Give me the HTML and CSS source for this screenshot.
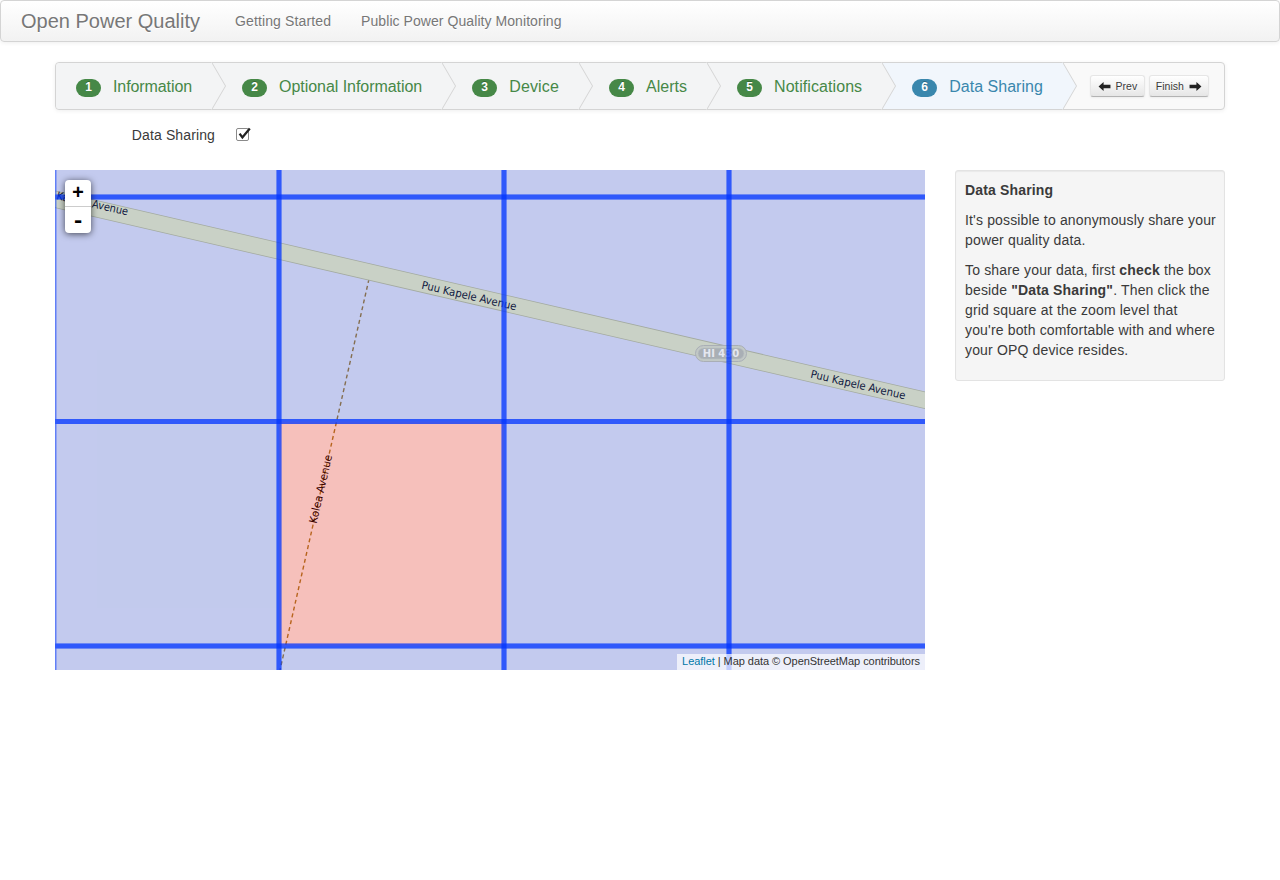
FILE: index.html
```html
<!DOCTYPE html>
<html lang="en">
<head>
<meta charset="utf-8">
<title>Open Power Quality</title>
<link rel="stylesheet" href="styles.css">
</head>
<body>
<nav class="navbar">
  <a class="brand" href="#">Open Power Quality</a>
  <ul class="nav">
    <li><a class="nav-short" href="#">Getting Started</a></li>
    <li><a class="nav-long" href="#">Public Power Quality Monitoring</a></li>
  </ul>
</nav>
<main class="container">
  <div class="wizard">
    <ul class="steps">
      <li class="step complete tight"><span class="badge">1</span>Information<span class="chevron"></span></li>
      <li class="step complete snug"><span class="badge">2</span>Optional Information<span class="chevron"></span></li>
      <li class="step complete wide"><span class="badge">3</span>Device<span class="chevron"></span></li>
      <li class="step complete"><span class="badge">4</span>Alerts<span class="chevron"></span></li>
      <li class="step complete loose"><span class="badge">5</span>Notifications<span class="chevron"></span></li>
      <li class="step active last-step"><span class="badge">6</span>Data Sharing<span class="chevron"></span></li>
    </ul>
    <div class="actions">
      <button class="btn" type="button">
        <svg class="arrow" viewBox="0 0 14 12" aria-hidden="true"><path d="M0.5 6 L6 1 V4 H13.5 V8 H6 V11 Z"/></svg>Prev
      </button>
      <button class="btn" type="button">Finish
        <svg class="arrow" viewBox="0 0 14 12" aria-hidden="true"><path d="M13.5 6 L8 1 V4 H0.5 V8 H8 V11 Z"/></svg>
      </button>
    </div>
  </div>

  <div class="control-group">
    <label class="control-label" for="share">Data Sharing</label>
    <span class="checkbox" id="share" role="checkbox" aria-checked="true">
      <svg viewBox="0 0 16 16" aria-hidden="true">
        <rect x="0.5" y="1.5" width="12" height="12" rx="1.5" class="box"/>
        <path d="M3.6 6.6 L6.4 10.4 L13.8 1.4" class="tick"/>
      </svg>
    </span>
  </div>

  <div class="content">
    <div class="map">
      <svg class="map-canvas" viewBox="0 0 870 500" aria-hidden="true">
        <rect width="870" height="500" class="land"/>
        <rect x="42" y="180" width="190" height="258" class="landuse"/>
        <line x1="314" y1="109" x2="225" y2="500" class="path"/>
        <text class="label-minor" textLength="70" lengthAdjust="spacingAndGlyphs" transform="translate(266 319) rotate(-77)" text-anchor="middle" dy="3.5">Kolea Avenue</text>

        <rect x="-1" y="-198" width="225" height="225" class="cell"/>
        <rect x="224" y="-198" width="225" height="225" class="cell"/>
        <rect x="449" y="-198" width="225" height="225" class="cell"/>
        <rect x="674" y="-198" width="225" height="225" class="cell"/>
        <rect x="-1" y="27" width="225" height="224.5" class="cell"/>
        <rect x="224" y="27" width="225" height="224.5" class="cell"/>
        <rect x="449" y="27" width="225" height="224.5" class="cell"/>
        <rect x="674" y="27" width="225" height="224.5" class="cell"/>
        <rect x="-1" y="251.5" width="225" height="224.5" class="cell"/>
        <rect x="224" y="251.5" width="225" height="224.5" class="cell selected"/>
        <rect x="449" y="251.5" width="225" height="224.5" class="cell"/>
        <rect x="674" y="251.5" width="225" height="224.5" class="cell"/>
        <rect x="-1" y="476" width="225" height="225" class="cell"/>
        <rect x="224" y="476" width="225" height="225" class="cell"/>
        <rect x="449" y="476" width="225" height="225" class="cell"/>
        <rect x="674" y="476" width="225" height="225" class="cell"/>

        <line x1="-10" y1="27" x2="880" y2="232.6" class="road-case"/>
        <line x1="-10" y1="27" x2="880" y2="232.6" class="road"/>
        <text class="label-road" textLength="73" lengthAdjust="spacingAndGlyphs" transform="translate(1 29) rotate(13)">Kapele Avenue</text>
        <text class="label-road" textLength="97" lengthAdjust="spacingAndGlyphs" transform="translate(414 126) rotate(13)" text-anchor="middle" dy="3.5">Puu Kapele Avenue</text>
        <text class="label-road" textLength="97" lengthAdjust="spacingAndGlyphs" transform="translate(803 215) rotate(13)" text-anchor="middle" dy="3.5">Puu Kapele Avenue</text>
        <rect x="640.5" y="175.5" width="51" height="16" rx="8" class="shield"/>
        <rect x="643" y="178" width="46" height="11" rx="5.5" class="shield-inner"/>
        <text x="666" y="187" class="shield-text" text-anchor="middle">HI 430</text>

        <g class="grid-lines">
          <rect x="-1" y="-198" width="225" height="225"/>
          <rect x="224" y="-198" width="225" height="225"/>
          <rect x="449" y="-198" width="225" height="225"/>
          <rect x="674" y="-198" width="225" height="225"/>
          <rect x="-1" y="27" width="225" height="224.5"/>
          <rect x="224" y="27" width="225" height="224.5"/>
          <rect x="449" y="27" width="225" height="224.5"/>
          <rect x="674" y="27" width="225" height="224.5"/>
          <rect x="-1" y="251.5" width="225" height="224.5"/>
          <rect x="224" y="251.5" width="225" height="224.5"/>
          <rect x="449" y="251.5" width="225" height="224.5"/>
          <rect x="674" y="251.5" width="225" height="224.5"/>
          <rect x="-1" y="476" width="225" height="225"/>
          <rect x="224" y="476" width="225" height="225"/>
          <rect x="449" y="476" width="225" height="225"/>
          <rect x="674" y="476" width="225" height="225"/>
        </g>
      </svg>
      <div class="zoom">
        <a class="zoom-in" href="#">+</a>
        <a class="zoom-out" href="#">-</a>
      </div>
      <div class="attribution"><a href="#">Leaflet</a> | Map data © OpenStreetMap contributors</div>
    </div>
    <aside class="well">
      <p class="well-title"><strong>Data Sharing</strong></p>
      <p>It's possible to anonymously share your power quality data.</p>
      <p>To share your data, first <strong>check</strong> the box beside <strong>"Data Sharing"</strong>. Then click the grid square at the zoom level that you're both comfortable with and where your OPQ device resides.</p>
    </aside>
  </div>
</main>
</body>
</html>
```
FILE: styles.css
```css
* { box-sizing: border-box; }

html, body { margin: 0; padding: 0; }

body {
  background: #fff;
  color: #3a3a3a;
  font-family: "Liberation Sans", Arial, sans-serif;
  font-size: 14px;
  line-height: 20px;
}

a { text-decoration: none; }

.navbar {
  display: flex;
  align-items: stretch;
  height: 42px;
  background: linear-gradient(to bottom, #fff, #f2f2f2);
  border: 1px solid #d4d4d4;
  border-radius: 4px;
  box-shadow: 0 1px 4px rgba(0, 0, 0, .065);
}

.brand {
  padding: 10px 20px;
  color: #777;
  font-size: 20px;
  font-weight: 200;
  text-shadow: 0 1px 0 #fff;
}

.nav {
  display: flex;
  margin: 0;
  padding: 0;
  list-style: none;
}

.nav a {
  display: block;
  padding: 10px 15px 11px;
  color: #777;
  text-shadow: 0 1px 0 #fff;
}

.nav .nav-short { letter-spacing: .13px; }
.nav .nav-long { letter-spacing: .065px; }

.container {
  width: 1170px;
  margin: 20px 0 0 55px;
}

.wizard {
  display: flex;
  align-items: center;
  height: 48px;
  background: #f9f9f9;
  border: 1px solid #d4d4d4;
  border-radius: 4px;
  box-shadow: 0 1px 4px rgba(0, 0, 0, .065);
}

.steps {
  display: flex;
  margin: 0;
  padding: 0;
  list-style: none;
}

.step {
  position: relative;
  height: 46px;
  padding: 0 20px 0 30px;
  font-size: 16px;
  line-height: 48px;
  white-space: nowrap;
}

.step:first-child {
  padding-left: 20px;
  border-radius: 4px 0 0 4px;
}

.tight { letter-spacing: -.09px; }
.snug { letter-spacing: -.05px; }
.wide { letter-spacing: .17px; }
.loose { letter-spacing: .08px; }
.last-step { letter-spacing: .02px; }

.complete { background: #f3f4f5; color: #468847; }
.active { background: #f1f6fc; color: #3a87ad; }

.badge {
  display: inline-block;
  width: 25px;
  margin-right: 12px;
  padding: 1px 0 2px;
  border-radius: 9px;
  color: #fff;
  font-size: 12px;
  font-weight: bold;
  letter-spacing: 0;
  line-height: 15px;
  text-align: center;
  vertical-align: 1px;
  text-shadow: 0 -1px 0 rgba(0, 0, 0, .25);
}

.complete .badge { background: #468847; }
.active .badge { background: #3a87ad; }

.chevron {
  position: absolute;
  top: -1px;
  right: -14px;
  z-index: 1;
  display: block;
  border: 24px solid transparent;
  border-left: 14px solid #d4d4d4;
  border-right: 0;
}

.chevron::before {
  content: "";
  position: absolute;
  top: -24px;
  right: 1px;
  display: block;
  border: 24px solid transparent;
  border-left: 14px solid #f3f4f5;
  border-right: 0;
}

.active .chevron::before { border-left-color: #f1f6fc; }

.actions {
  display: flex;
  gap: 4px;
  margin-left: 27px;
}

.btn {
  display: inline-flex;
  align-items: center;
  justify-content: center;
  height: 22px;
  padding: 0 6px;
  background: linear-gradient(to bottom, #fff, #e6e6e6);
  border: 1px solid #e6e6e6;
  border-bottom-color: #b3b3b3;
  border-radius: 3px;
  box-shadow: inset 0 1px 0 rgba(255, 255, 255, .2), 0 1px 2px rgba(0, 0, 0, .05);
  color: #3a3a3a;
  font-family: inherit;
  font-size: 10.5px;
  line-height: 14px;
  gap: 5px;
  text-shadow: 0 1px 1px rgba(255, 255, 255, .75);
}

.btn:first-child { width: 55px; }
.btn:last-child { width: 60px; }

.arrow {
  display: block;
  width: 13px;
  height: 11px;
  fill: #222;
}

.control-group {
  display: flex;
  align-items: center;
  height: 60px;
  padding-bottom: 10px;
}

.control-label {
  width: 160px;
  letter-spacing: .12px;
  text-align: right;
}

.checkbox {
  display: block;
  width: 16px;
  height: 16px;
  margin-left: 21px;
}

.checkbox svg {
  display: block;
  width: 16px;
  height: 16px;
  overflow: visible;
}

.box {
  fill: #fff;
  stroke: #8a8a8a;
  stroke-width: 1;
}

.tick {
  fill: none;
  stroke: #222;
  stroke-width: 2.3;
}

.content {
  display: flex;
  align-items: flex-start;
  justify-content: space-between;
}

.map {
  position: relative;
  width: 870px;
  height: 500px;
  overflow: hidden;
}

.map-canvas {
  display: block;
  width: 870px;
  height: 500px;
}

.land { fill: #f4f1ea; }
.landuse { fill: #f3f0e9; }

.path {
  stroke: #a67d25;
  stroke-width: 1.4;
  stroke-dasharray: 4 3;
}

.cell { fill: #03f; fill-opacity: .2; }
.cell.selected { fill: #f00; }

.grid-lines rect {
  fill: none;
  stroke: #03f;
  stroke-width: 5;
  stroke-opacity: .5;
}

.road-case { stroke: #a3aaa0; stroke-width: 17; }
.road { stroke: #c9d1c6; stroke-width: 15.5; }

.label-road, .label-minor {
  font-family: "DejaVu Sans", sans-serif;
  font-size: 11px;
}

.label-road { fill: #10183f; }
.label-minor { fill: #000; }

.shield { fill: #c2c9c6; stroke: #a9aeb6; }
.shield-inner { fill: #a9afb5; stroke: #bcc2c4; stroke-width: .6; }
.shield-text {
  fill: #e4e7f0;
  font-family: "DejaVu Sans", sans-serif;
  font-size: 10px;
  font-weight: bold;
}

.zoom {
  position: absolute;
  top: 10px;
  left: 10px;
  width: 26px;
  border-radius: 4px;
  background: #fff;
  box-shadow: 0 1px 7px rgba(0, 0, 0, .65);
}

.zoom a {
  display: block;
  color: #000;
  font-family: "Liberation Mono", monospace;
  font-weight: bold;
  text-align: center;
}

.zoom .zoom-in {
  height: 27px;
  border-bottom: 1px solid #ccc;
  border-radius: 4px 4px 0 0;
  font-size: 20px;
  line-height: 28px;
}

.zoom .zoom-out {
  height: 26px;
  border-radius: 0 0 4px 4px;
  font-size: 22px;
  line-height: 29px;
}

.attribution {
  position: absolute;
  right: 0;
  bottom: 0;
  padding: 0 5px 1px;
  background: rgba(255, 255, 255, .7);
  color: #333;
  font-size: 11px;
  letter-spacing: -.05px;
  line-height: 15px;
}

.attribution a { color: #0078a8; }

.well {
  width: 270px;
  min-height: 211px;
  padding: 9px 7px 9px 9px;
  background: #f5f5f5;
  border: 1px solid #e3e3e3;
  border-radius: 3px;
  box-shadow: inset 0 1px 1px rgba(0, 0, 0, .05);
  letter-spacing: .16px;
}

.well p { margin: 0 0 10px; }
```
